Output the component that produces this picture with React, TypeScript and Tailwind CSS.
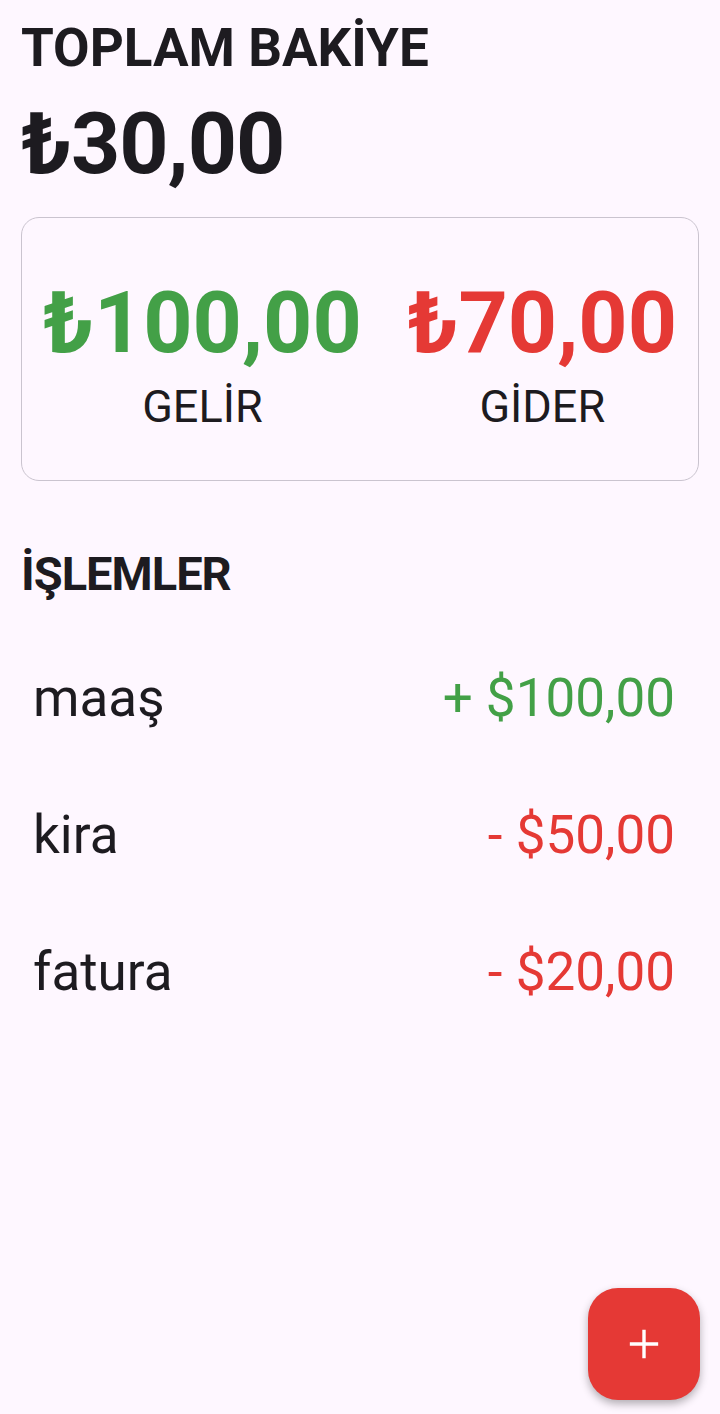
const transactions = [
  { title: "maaş", amount: "+ $100,00", income: true },
  { title: "kira", amount: "- $50,00", income: false },
  { title: "fatura", amount: "- $20,00", income: false },
];

const App = () => {
  return (
    <div className="relative w-[720px] h-[1414px] overflow-hidden bg-[#FEF7FF] text-[#1D1B20] font-['Roboto',sans-serif]">
      <div className="flex flex-col px-[21px] pt-[14px]">
        <h1 className="text-[53px] font-bold leading-[68px]">TOPLAM BAKİYE</h1>
        <p className="mt-[12px] text-[86px] font-bold leading-[100px] tracking-[-1px]">₺30,00</p>

        <div className="mt-[23px] flex h-[264px] items-center justify-between rounded-[18px] border-[1.5px] border-[#CAC4CF] px-[21px] pt-[10px]">
          <div className="flex flex-col items-center">
            <span className="text-[86px] font-bold leading-[100px] text-[#43A047]">₺100,00</span>
            <span className="mt-[6px] text-[45px] leading-[56px]">GELİR</span>
          </div>
          <div className="flex flex-col items-center">
            <span className="text-[86px] font-bold leading-[100px] text-[#E53935]">₺70,00</span>
            <span className="mt-[6px] text-[45px] leading-[56px]">GİDER</span>
          </div>
        </div>

        <h2 className="mt-[65px] text-[47px] font-bold leading-[56px] tracking-[-1px]">İŞLEMLER</h2>

        <ul className="mt-[47px] flex flex-col">
          {transactions.map((t) => (
            <li key={t.title} className="flex h-[137px] items-center justify-between pl-[12px] pr-[24px] pb-[40px]">
              <span className="text-[53px] leading-[60px]">{t.title}</span>
              <span className={`text-[53px] leading-[60px] ${t.income ? "text-[#43A047]" : "text-[#E53935]"}`}>
                {t.amount}
              </span>
            </li>
          ))}
        </ul>
      </div>

      <button className="absolute right-[20px] bottom-[14px] flex size-[112px] items-center justify-center rounded-[30px] bg-[#E53935] shadow-[0_4px_8px_rgba(0,0,0,0.3)]">
        <svg width="34" height="34" viewBox="0 0 24 24" fill="none" stroke="white" strokeWidth="2.4">
          <path d="M12 2v20M2 12h20" />
        </svg>
      </button>
    </div>
  );
};

export default App;
